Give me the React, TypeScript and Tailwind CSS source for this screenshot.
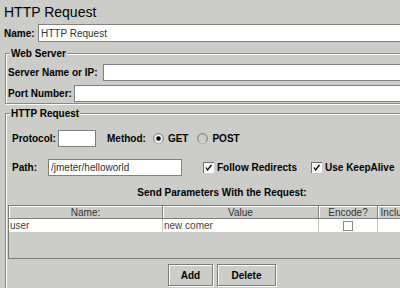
import React from 'react';

const etched = 'border border-[#8a8a8a] shadow-[inset_1px_1px_0_#ffffff,1px_1px_0_#ffffff]';
const field = 'bg-white border border-[#808080] flex items-center px-[2px] text-[10px] text-[#333] font-normal overflow-hidden whitespace-nowrap';

function Radio({ checked }: { checked?: boolean }) {
  return (
    <svg width="11" height="11" viewBox="0 0 11 11" className="shrink-0">
      <circle cx="5.5" cy="5.5" r="4.8" fill={checked ? '#f4f4f2' : '#cccdc9'} stroke="#6f6f6f" strokeWidth="1" />
      <path d="M2.3 8.7 A4.5 4.5 0 0 0 8.7 8.7" fill="none" stroke="#ffffff" strokeWidth="0.8" />
      {checked && <circle cx="5.5" cy="5.5" r="2.3" fill="#000" />}
    </svg>
  );
}

function Check({ checked }: { checked?: boolean }) {
  return (
    <svg width="11" height="11" viewBox="0 0 11 11" className="shrink-0">
      <rect x="0.5" y="0.5" width="10" height="10" fill="#f6f6f4" stroke="#6f6f6f" />
      <path d="M10.5 1 V10.5 H1" fill="none" stroke="#ffffff" />
      {checked && <path d="M3 5.5 L4.6 8 L8.5 3" fill="none" stroke="#000" strokeWidth="1.3" />}
    </svg>
  );
}

function Group({ label, className, children }: { label: string; className?: string; children: React.ReactNode }) {
  return (
    <div className={`relative mx-[5px] ${etched} ${className ?? ''}`}>
      <span className="absolute left-[4px] top-[-6px] bg-[#cccdc9] px-[1px] text-[10px] leading-[12px] font-bold">
        {label}
      </span>
      {children}
    </div>
  );
}

function HeaderCell({ w, children }: { w: string; children: React.ReactNode }) {
  return (
    <div
      className={`${w} shrink-0 h-full flex items-center justify-center border-r border-[#808080] shadow-[inset_1px_1px_0_#ffffff] text-[10px] text-[#333] whitespace-nowrap overflow-hidden`}
    >
      {children}
    </div>
  );
}

function BodyCell({ w, children, center }: { w: string; children?: React.ReactNode; center?: boolean }) {
  return (
    <div
      className={`${w} shrink-0 h-full flex items-center ${center ? 'justify-center' : 'pl-[1px]'} border-r border-[#c8c8c8] bg-white text-[10px] text-[#444] whitespace-nowrap overflow-hidden`}
    >
      {children}
    </div>
  );
}

export default function App() {
  return (
    <div className="w-[400px] h-[288px] overflow-hidden bg-[#cccdc9] text-black font-['Liberation_Sans',Arial,sans-serif]">
      <div className="w-[444px]">
        {/* Title */}
        <div className="h-[24px] pt-[4px] pl-[4px] text-[14px] leading-[16px]">HTTP Request</div>

        {/* Name */}
        <div className="flex items-center h-[18px] pl-[4px]">
          <span className="w-[34px] text-[10px] font-bold">Name:</span>
          <div className={`${field} flex-1 h-full`}>HTTP Request</div>
        </div>

        {/* Web Server */}
        <Group label="Web Server" className="mt-[11px] pt-[10px] pb-[1px] pl-[2px]">
          <div className="flex items-center h-[17px]">
            <span className="w-[95px] text-[10px] font-bold whitespace-nowrap">Server Name or IP:</span>
            <div className={`${field} flex-1 h-full`} />
          </div>
          <div className="flex items-center h-[17px] mt-[4px]">
            <span className="w-[66px] text-[10px] font-bold whitespace-nowrap">Port Number:</span>
            <div className={`${field} flex-1 h-full`} />
          </div>
        </Group>

        {/* HTTP Request */}
        <Group label="HTTP Request" className="mt-[9px] pt-[16px] h-[200px]">
          <div className="flex items-center h-[17px] pl-[6px] text-[10px] font-bold">
            <span className="w-[46px]">Protocol:</span>
            <div className={`${field} w-[38px] h-full`} />
            <span className="ml-[11px]">Method:</span>
            <span className="ml-[7px] flex items-center">
              <Radio checked />
              <span className="ml-[4px]">GET</span>
            </span>
            <span className="ml-[9px] flex items-center">
              <Radio />
              <span className="ml-[4px]">POST</span>
            </span>
          </div>

          <div className="flex items-center h-[17px] mt-[12px] pl-[6px] text-[10px] font-bold">
            <span className="w-[36px]">Path:</span>
            <div className={`${field} w-[134px] h-full`}>/jmeter/helloworld</div>
            <span className="ml-[21px] flex items-center">
              <Check checked />
              <span className="ml-[3px]">Follow Redirects</span>
            </span>
            <span className="ml-[14px] flex items-center">
              <Check checked />
              <span className="ml-[3px]">Use KeepAlive</span>
            </span>
          </div>

          <div className="mt-[11px] text-center text-[10px] leading-[12px] font-bold">
            Send Parameters With the Request:
          </div>

          {/* Table */}
          <div className="ml-[2px] mr-[-2px] mt-[6px] h-[54px] border border-[#7a7a7a] bg-[#cccdc9] overflow-hidden">
            <div className="flex h-[13px] border-b border-[#808080]">
              <HeaderCell w="w-[154px]">Name:</HeaderCell>
              <HeaderCell w="w-[156px]">Value</HeaderCell>
              <HeaderCell w="w-[59px]">Encode?</HeaderCell>
              <HeaderCell w="w-[44px]">Include?</HeaderCell>
            </div>
            <div className="flex h-[13px]">
              <BodyCell w="w-[154px]">user</BodyCell>
              <BodyCell w="w-[156px]">new comer</BodyCell>
              <BodyCell w="w-[59px]" center>
                <svg width="10" height="10" viewBox="0 0 10 10">
                  <rect x="0.5" y="0.5" width="9" height="9" fill="#ffffff" stroke="#8a8a8a" />
                </svg>
              </BodyCell>
              <BodyCell w="w-[44px]" />
            </div>
          </div>

          {/* Buttons */}
          <div className="flex justify-center gap-[4px] mt-[5px]">
            <button className="w-[45px] h-[22px] border border-[#7a7a7a] bg-[#cccdc9] shadow-[inset_1px_1px_0_#ffffff,1px_1px_0_#ffffff] text-[10px] font-bold">
              Add
            </button>
            <button className="w-[59px] h-[22px] border border-[#7a7a7a] bg-[#cccdc9] shadow-[inset_1px_1px_0_#ffffff,1px_1px_0_#ffffff] text-[10px] font-bold">
              Delete
            </button>
          </div>
        </Group>
      </div>
    </div>
  );
}
